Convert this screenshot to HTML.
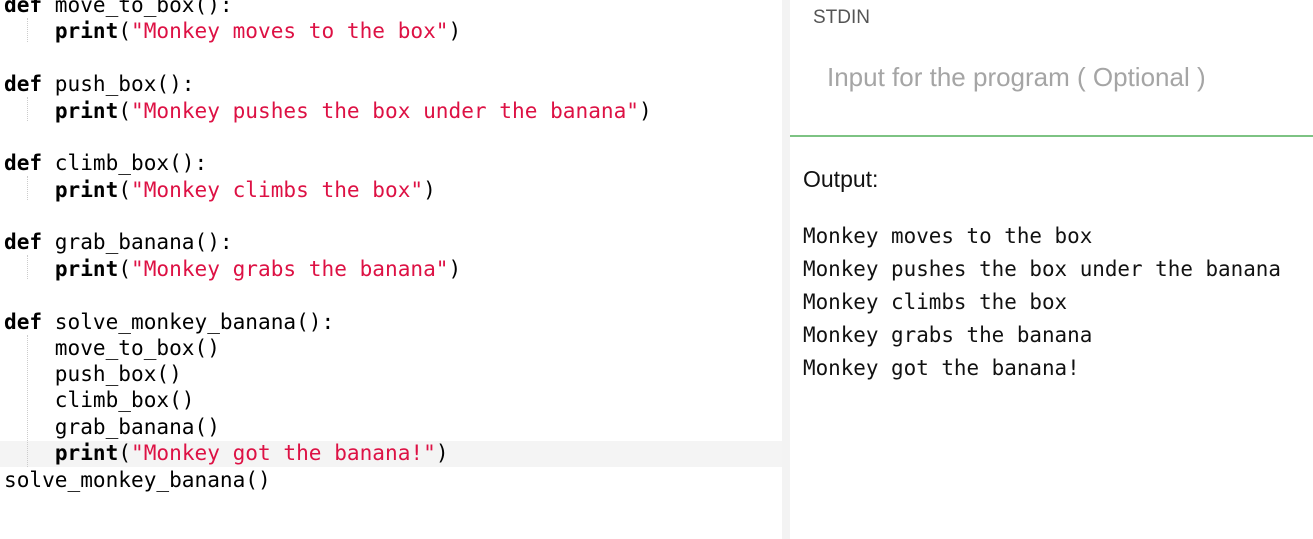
<!DOCTYPE html>
<html><head><style>
body{margin:0;width:1313px;height:539px;overflow:hidden;background:#fff;position:relative;font-family:"DejaVu Sans Mono","Liberation Mono",monospace}
.code{position:absolute;left:0;top:0;width:782px;height:539px}
.ln{position:absolute;left:4px;font-size:21.1px;white-space:pre;color:#000;line-height:26px}
.k{font-weight:bold}
.s{color:#dd1144}
.guide{position:absolute;left:27px;border-left:1px dotted #ccc}
.hl{position:absolute;left:0;top:441px;width:782px;height:26px;background:#f4f4f4}
.strip{position:absolute;left:782px;top:0;width:8px;height:539px;background:#f3f3f3}
.sans{font-family:"Liberation Sans",sans-serif;position:absolute}
.out{position:absolute;left:803px;font-size:20.9px;white-space:pre;color:#111;line-height:26px}
</style></head><body>
<div class="code">
<div class="hl"></div>
<div class="guide" style="top:18px;height:24px"></div>
<div class="guide" style="top:97px;height:24px"></div>
<div class="guide" style="top:176px;height:24px"></div>
<div class="guide" style="top:255px;height:24px"></div>
<div class="guide" style="top:335px;height:132px"></div>
<div class="ln" style="top:-8px"><span class="k">def</span> move_to_box():</div>
<div class="ln" style="top:18px">    <span class="k">print</span>(<span class="s">"Monkey moves to the box"</span>)</div>
<div class="ln" style="top:71px"><span class="k">def</span> push_box():</div>
<div class="ln" style="top:98px">    <span class="k">print</span>(<span class="s">"Monkey pushes the box under the banana"</span>)</div>
<div class="ln" style="top:150px"><span class="k">def</span> climb_box():</div>
<div class="ln" style="top:177px">    <span class="k">print</span>(<span class="s">"Monkey climbs the box"</span>)</div>
<div class="ln" style="top:229px"><span class="k">def</span> grab_banana():</div>
<div class="ln" style="top:256px">    <span class="k">print</span>(<span class="s">"Monkey grabs the banana"</span>)</div>
<div class="ln" style="top:309px"><span class="k">def</span> solve_monkey_banana():</div>
<div class="ln" style="top:335px">    move_to_box()</div>
<div class="ln" style="top:361px">    push_box()</div>
<div class="ln" style="top:387px">    climb_box()</div>
<div class="ln" style="top:414px">    grab_banana()</div>
<div class="ln" style="top:440px">    <span class="k">print</span>(<span class="s">"Monkey got the banana!"</span>)</div>
<div class="ln" style="top:467px">solve_monkey_banana()</div>
</div>
<div class="strip"></div>
<div class="sans" style="left:813px;top:7px;font-size:19px;color:#555">STDIN</div>
<div class="sans" style="left:827px;top:62px;font-size:26px;color:#a5a5a5">Input for the program ( Optional )</div>
<div style="position:absolute;left:790px;top:135px;width:523px;height:2px;background:#7dc383"></div>
<div class="sans" style="left:803px;top:166px;font-size:23px;color:#111">Output:</div>
<div class="out" style="top:223px">Monkey moves to the box</div>
<div class="out" style="top:256px">Monkey pushes the box under the banana</div>
<div class="out" style="top:289px">Monkey climbs the box</div>
<div class="out" style="top:322px">Monkey grabs the banana</div>
<div class="out" style="top:355px">Monkey got the banana!</div>
</body></html>
